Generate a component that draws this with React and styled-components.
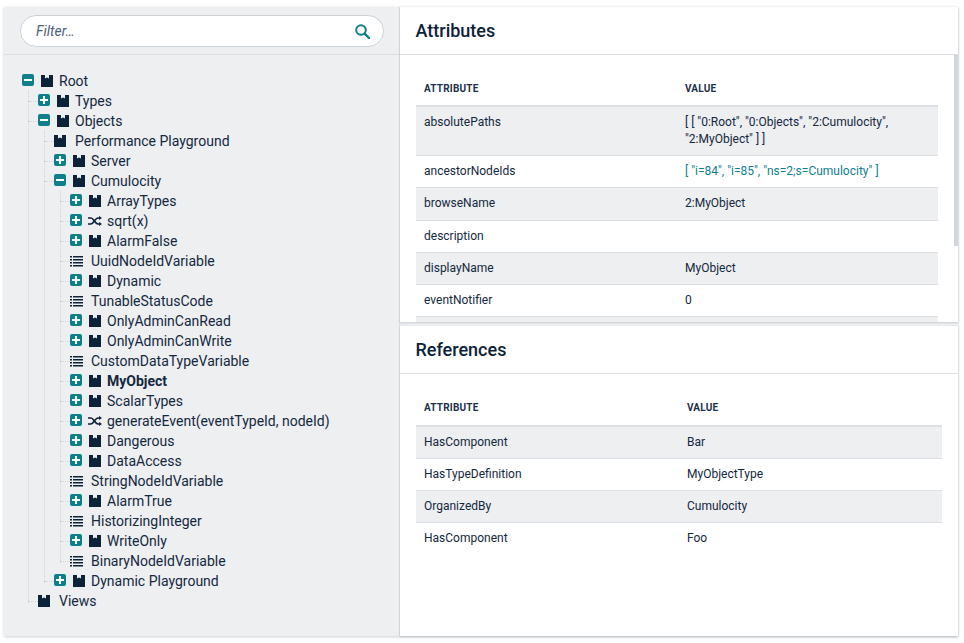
import React from 'react';
import styled, { createGlobalStyle } from 'styled-components';

const GlobalStyle = createGlobalStyle`
  html, body {
    margin: 0;
    padding: 0;
    background: #fff;
    font-family: Roboto, "Liberation Sans", sans-serif;
    color: #14283e;
  }
`;

const Page = styled.div`
  box-sizing: border-box;
  width: 964px;
  height: 643px;
  padding: 7px 6px 7px 4px;
`;

const Shell = styled.div`
  display: flex;
  height: 629px;
  box-shadow: 0 1px 3px rgba(20, 40, 62, 0.22);
`;

const Sidebar = styled.aside`
  box-sizing: border-box;
  width: 396px;
  flex: none;
  background: #edeff1;
  border-right: 1px solid #dcdfe4;
`;

const FilterBar = styled.div`
  box-sizing: border-box;
  height: 48px;
  padding: 8px 15px 0 16px;
  border-bottom: 1px solid #dcdfe4;
`;

const FilterBox = styled.div`
  box-sizing: border-box;
  display: flex;
  align-items: center;
  justify-content: space-between;
  height: 32px;
  padding: 0 13px 0 15px;
  background: #fff;
  border: 1px solid #ccd1d8;
  border-radius: 16px;
  font-size: 14px;
  font-style: italic;
  color: #4e6079;
  svg {
    color: #0f7f8b;
  }
`;

const TreeWrap = styled.div`
  padding: 16px 0 0 18px;
`;

const Branch = styled.ul`
  list-style: none;
  margin: 0;
  padding: 0 0 0 ${(p) => (p.$root ? 0 : 16)}px;
  position: relative;

  &::before {
    content: '';
    position: absolute;
    left: 6px;
    top: 0;
    bottom: 8px;
    border-left: 1px dotted #cfd4da;
    display: ${(p) => (p.$root ? 'none' : 'block')};
  }
`;

const Row = styled.div`
  position: relative;
  display: flex;
  align-items: center;
  height: 20px;
  font-size: 14px;
  font-weight: ${(p) => (p.$bold ? 700 : 400)};
  white-space: nowrap;

  &::before {
    content: '';
    position: absolute;
    left: -10px;
    width: 10px;
    top: 10px;
    border-top: 1px dotted #cfd4da;
    display: ${(p) => (p.$root ? 'none' : 'block')};
  }
`;

const Toggler = styled.span`
  position: relative;
  flex: none;
  width: 12px;
  height: 12px;
  margin: -2px 7px 0 0;
  background: #0f7f8b;
  border-radius: 2px;

  &::before,
  &::after {
    content: '';
    position: absolute;
    background: #fff;
  }
  &::before {
    left: 2px;
    right: 2px;
    top: 5px;
    height: 2px;
  }
  &::after {
    display: ${(p) => (p.$open ? 'none' : 'block')};
    top: 2px;
    bottom: 2px;
    left: 5px;
    width: 2px;
  }
`;

const NodeIcon = styled.span`
  display: flex;
  align-items: center;
  justify-content: center;
  flex: none;
  width: 12px;
  height: 12px;
  margin: 0 ${(p) => (p.$leaf ? 9 : 6)}px 0 0;
  color: #0b2239;

  svg {
    flex: none;
  }
`;

const Main = styled.main`
  flex: 1;
  display: flex;
  flex-direction: column;
  gap: 4px;
  min-width: 0;
  background: #edeff1;
`;

const Card = styled.section`
  display: flex;
  flex-direction: column;
  background: #fff;
  overflow: hidden;
  height: ${(p) => p.$height}px;
  box-shadow: 0 1px 2px rgba(20, 40, 62, 0.18);
  flex: none;
`;

const CardTitle = styled.h2`
  box-sizing: border-box;
  flex: none;
  display: flex;
  align-items: center;
  margin: 0;
  height: 48px;
  padding: 0 16px 0 15.5px;
  font-size: 18px;
  line-height: 1;
  font-weight: 500;
  color: #0b2239;
  border-bottom: 1px solid #dcdfe4;
`;

const Scroller = styled.div`
  position: relative;
  flex: 1;
  overflow: hidden;
  padding: ${(p) => (p.$padRight ? '16px 20px 0 16px' : '16px 16px 0 16px')};
`;

const ScrollThumb = styled.div`
  position: absolute;
  top: 0;
  right: 0;
  width: 4px;
  height: 191px;
  background: #d3d6d9;
`;

const Table = styled.table`
  width: 100%;
  table-layout: fixed;
  border-collapse: collapse;
  font-size: 12px;
  line-height: 17px;

  tbody tr:last-child td {
    border-bottom: 0;
  }
`;

const HeadCell = styled.th`
  height: ${(p) => p.$height}px;
  padding: 0 8px;
  text-align: left;
  font-size: 10px;
  font-weight: 700;
  letter-spacing: 0.2px;
  color: #1c3049;
  border-bottom: 2px solid #dcdfe4;
`;

const BodyRow = styled.tr`
  background: ${(p) => (p.$shaded ? '#edeff1' : '#fff')};
`;

const Cell = styled.td`
  box-sizing: border-box;
  height: ${(p) => p.$height || 32}px;
  padding: 7px 8px;
  vertical-align: top;
  color: ${(p) => (p.$link ? '#0f7f8b' : '#14283e')};
  border-bottom: 1px solid #dcdfe4;
  overflow-wrap: break-word;
`;

const SearchIcon = () => (
  <svg width="15" height="15" viewBox="0 0 15 15" fill="none" stroke="currentColor">
    <circle cx="6" cy="6" r="4.8" strokeWidth="2" />
    <path d="M9.6 9.6L14 14" strokeWidth="2.4" strokeLinecap="round" />
  </svg>
);

const BookIcon = () => (
  <svg width="12" height="12" viewBox="0 0 12 12" fill="currentColor">
    <path d="M0 0H4V3.4L6 2.4L8 3.4V0H12V12H0Z" />
  </svg>
);

const ListIcon = () => (
  <svg width="13" height="11" viewBox="0 0 13 11" fill="currentColor">
    <path d="M0 0H2V1.4H0ZM3 0H13V1.4H3ZM0 3H2V4.4H0ZM3 3H13V4.4H3ZM0 6H2V7.4H0ZM3 6H13V7.4H3ZM0 9H2V10.4H0ZM3 9H13V10.4H3Z" />
  </svg>
);

const ShuffleIcon = () => (
  <svg width="14" height="10" viewBox="0 0 14 10" fill="currentColor">
    <path d="M0 2H3C5.5 2 7 8 10 8H12M0 8H3C5.5 8 7 2 10 2H12" fill="none" stroke="currentColor" strokeWidth="1.6" />
    <path d="M11 0L14 2L11 4ZM11 6L14 8L11 10Z" />
  </svg>
);

const book = (name, kids, extra = {}) => ({ name, icon: 'book', kids, ...extra });
const leaf = (name, icon = 'list') => ({ name, icon });
const method = (name) => ({ name, icon: 'shuffle', kids: [] });

const tree = book('Root', [
  book('Types', []),
  book('Objects', [
    leaf('Performance Playground', 'book'),
    book('Server', []),
    book('Cumulocity', [
      book('ArrayTypes', []),
      method('sqrt(x)'),
      book('AlarmFalse', []),
      leaf('UuidNodeIdVariable'),
      book('Dynamic', []),
      leaf('TunableStatusCode'),
      book('OnlyAdminCanRead', []),
      book('OnlyAdminCanWrite', []),
      leaf('CustomDataTypeVariable'),
      book('MyObject', [], { bold: true }),
      book('ScalarTypes', []),
      method('generateEvent(eventTypeId, nodeId)'),
      book('Dangerous', []),
      book('DataAccess', []),
      leaf('StringNodeIdVariable'),
      book('AlarmTrue', []),
      leaf('HistorizingInteger'),
      book('WriteOnly', []),
      leaf('BinaryNodeIdVariable'),
    ], { open: true }),
    book('Dynamic Playground', []),
  ], { open: true }),
  leaf('Views', 'book'),
], { open: true });

const icons = {
  book: <BookIcon />,
  list: <ListIcon />,
  shuffle: <ShuffleIcon />,
};

const TreeNode = ({ node, root }) => (
  <li>
    <Row $root={root} $bold={node.bold}>
      {node.kids && <Toggler $open={node.open} />}
      <NodeIcon $leaf={!node.kids}>{icons[node.icon]}</NodeIcon>
      {node.name}
    </Row>
    {node.open && (
      <Branch>
        {node.kids.map((kid) => (
          <TreeNode key={kid.name} node={kid} />
        ))}
      </Branch>
    )}
  </li>
);

const attributes = [
  ['absolutePaths', '[ [ "0:Root", "0:Objects", "2:Cumulocity", "2:MyObject" ] ]', { height: 49 }],
  ['ancestorNodeIds', '[ "i=84", "i=85", "ns=2;s=Cumulocity" ]', { link: true }],
  ['browseName', '2:MyObject', { height: 33 }],
  ['description', ''],
  ['displayName', 'MyObject'],
  ['eventNotifier', '0'],
  ['', ''],
];

const references = [
  ['HasComponent', 'Bar'],
  ['HasTypeDefinition', 'MyObjectType'],
  ['OrganizedBy', 'Cumulocity'],
  ['HasComponent', 'Foo'],
];

const DataTable = ({ rows, headHeight }) => (
  <Table>
    <thead>
      <tr>
        <HeadCell $height={headHeight}>ATTRIBUTE</HeadCell>
        <HeadCell $height={headHeight}>VALUE</HeadCell>
      </tr>
    </thead>
    <tbody>
      {rows.map(([name, value, opts = {}], i) => (
        <BodyRow key={name + value} $shaded={i % 2 === 0}>
          <Cell $height={opts.height}>{name}</Cell>
          <Cell $height={opts.height} $link={opts.link}>{value}</Cell>
        </BodyRow>
      ))}
    </tbody>
  </Table>
);

const App = () => (
  <Page>
    <GlobalStyle />
    <Shell>
      <Sidebar>
        <FilterBar>
          <FilterBox>
            Filter…
            <SearchIcon />
          </FilterBox>
        </FilterBar>
        <TreeWrap>
          <Branch $root>
            <TreeNode node={tree} root />
          </Branch>
        </TreeWrap>
      </Sidebar>
      <Main>
        <Card $height={315}>
          <CardTitle>Attributes</CardTitle>
          <Scroller $padRight>
            <DataTable rows={attributes} headHeight={34} />
            <ScrollThumb />
          </Scroller>
        </Card>
        <Card $height={310}>
          <CardTitle>References</CardTitle>
          <Scroller>
            <DataTable rows={references} headHeight={35} />
          </Scroller>
        </Card>
      </Main>
    </Shell>
  </Page>
);

export default App;
